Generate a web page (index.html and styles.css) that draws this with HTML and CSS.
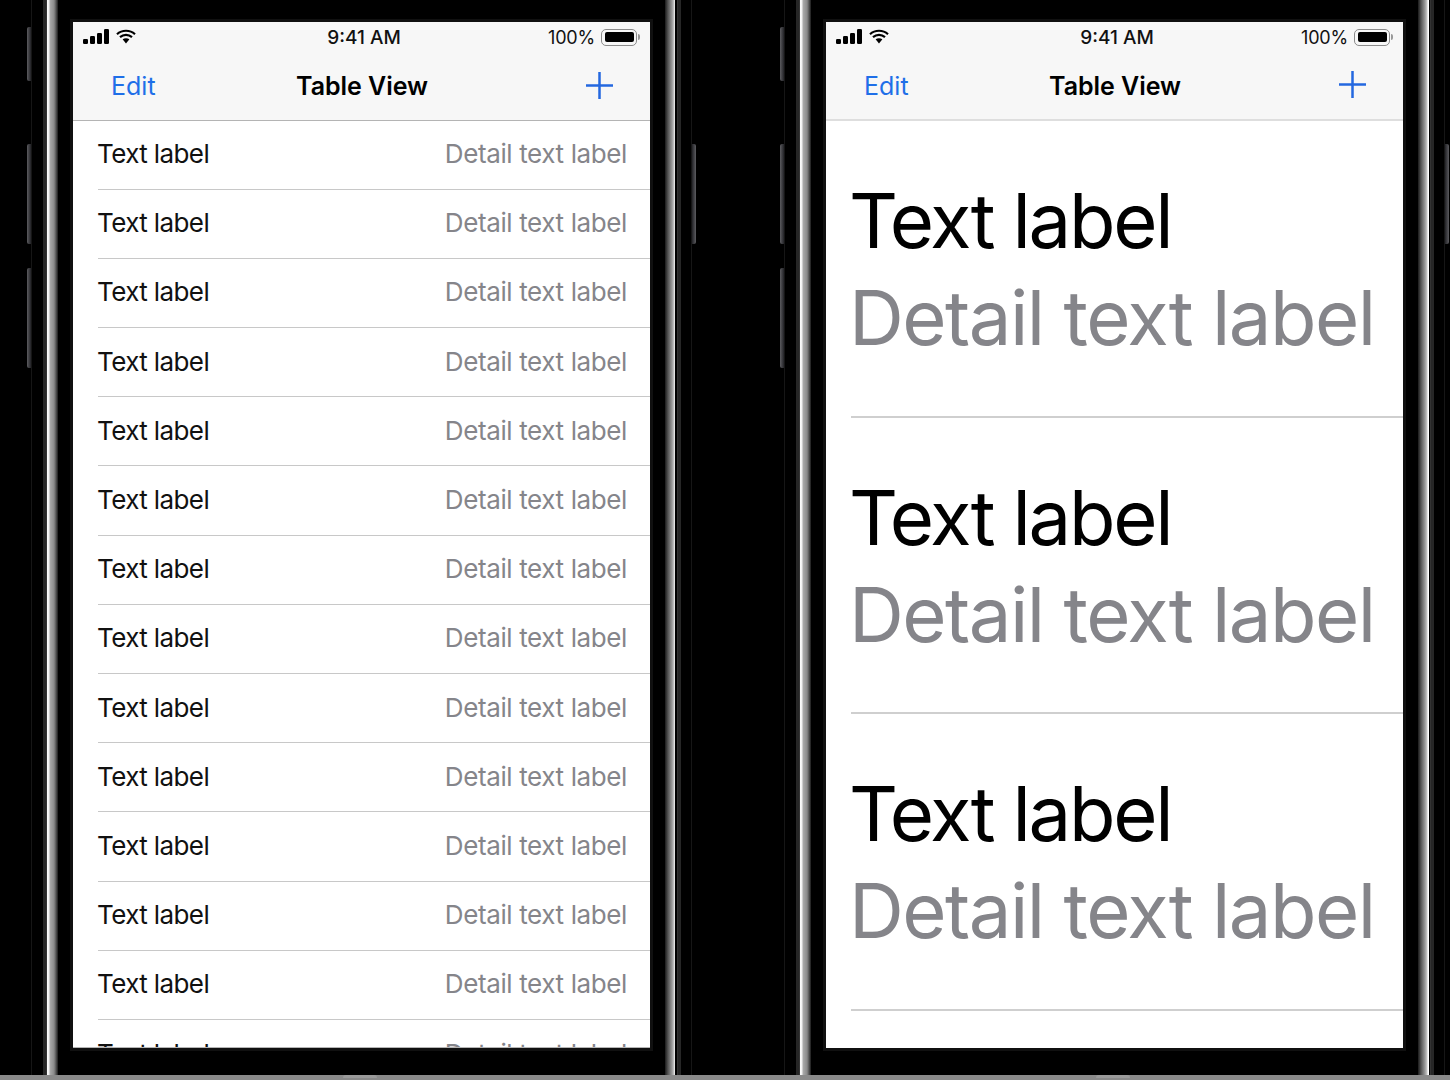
FILE: index.html
```html
<!DOCTYPE html>
<html lang="en">
<head>
    <meta charset="UTF-8">
    <title>Table View</title>
    <link rel="stylesheet" href="styles.css">
</head>
<body>

<div class="stage">
    <div class="phone">
        <span class="line line-left"></span>
        <span class="btn btn-mute"></span>
        <span class="btn btn-up"></span>
        <span class="btn btn-down"></span>
        <span class="line line-right"></span>
        <span class="btn btn-power"></span>
        <span class="home"></span>
        <div class="band band-l"></div>
        <div class="bezel">
            <div class="screen screen-edged">
                <div class="statusbar">
                    <div class="status-left">
                        <svg width="26" height="16" viewBox="0 0 26 16"><rect x="0" y="10" width="5" height="5" rx="1.2"/><rect x="7" y="7" width="5" height="8" rx="1.2"/><rect x="14" y="4" width="5" height="11" rx="1.2"/><rect x="21" y="0" width="5" height="15" rx="1.2"/></svg>
                        <svg class="wifi-icon" width="20" height="15" viewBox="0 0 20 15"><path class="wifi" d="M1 5.2C6 .6 14 .6 19 5.2M4 8.2c3.500-3 8.500-3 12 0"/><path d="M6.600 10.300c2-1.500 4.800-1.500 6.800 0L10 14.500z"/></svg>
                    </div>
                    <div class="time">9:41 AM</div>
                    <div class="status-right">
                        <span class="percent">100%</span>
                        <span class="battery"><span class="battery-fill"></span></span>
                        <span class="battery-nub"></span>
                    </div>
                </div>
                <div class="navbar">
                    <a class="edit">Edit</a>
                    <div class="nav-title">Table View</div>
                    <svg class="plus" width="27" height="27" viewBox="0 0 27 27"><path d="M13.500 0v27M0 13.500h27"/></svg>
                </div>
                <div class="list">
                    <div class="row"><span class="label">Text label</span><span class="detail">Detail text label</span></div>
                    <div class="row"><span class="label">Text label</span><span class="detail">Detail text label</span></div>
                    <div class="row"><span class="label">Text label</span><span class="detail">Detail text label</span></div>
                    <div class="row"><span class="label">Text label</span><span class="detail">Detail text label</span></div>
                    <div class="row"><span class="label">Text label</span><span class="detail">Detail text label</span></div>
                    <div class="row"><span class="label">Text label</span><span class="detail">Detail text label</span></div>
                    <div class="row"><span class="label">Text label</span><span class="detail">Detail text label</span></div>
                    <div class="row"><span class="label">Text label</span><span class="detail">Detail text label</span></div>
                    <div class="row"><span class="label">Text label</span><span class="detail">Detail text label</span></div>
                    <div class="row"><span class="label">Text label</span><span class="detail">Detail text label</span></div>
                    <div class="row"><span class="label">Text label</span><span class="detail">Detail text label</span></div>
                    <div class="row"><span class="label">Text label</span><span class="detail">Detail text label</span></div>
                    <div class="row"><span class="label">Text label</span><span class="detail">Detail text label</span></div>
                    <div class="row"><span class="label">Text label</span><span class="detail">Detail text label</span></div>
                </div>
            </div>
        </div>
        <div class="band band-r"></div>
    </div>

    <div class="phone">
        <span class="line line-left"></span>
        <span class="btn btn-mute"></span>
        <span class="btn btn-up"></span>
        <span class="btn btn-down"></span>
        <span class="line line-right"></span>
        <span class="btn btn-power"></span>
        <span class="home"></span>
        <div class="band band-l"></div>
        <div class="bezel">
            <div class="screen">
                <div class="statusbar">
                    <div class="status-left">
                        <svg width="26" height="16" viewBox="0 0 26 16"><rect x="0" y="10" width="5" height="5" rx="1.2"/><rect x="7" y="7" width="5" height="8" rx="1.2"/><rect x="14" y="4" width="5" height="11" rx="1.2"/><rect x="21" y="0" width="5" height="15" rx="1.2"/></svg>
                        <svg class="wifi-icon" width="20" height="15" viewBox="0 0 20 15"><path class="wifi" d="M1 5.2C6 .6 14 .6 19 5.2M4 8.2c3.500-3 8.500-3 12 0"/><path d="M6.600 10.300c2-1.500 4.800-1.500 6.800 0L10 14.500z"/></svg>
                    </div>
                    <div class="time">9:41 AM</div>
                    <div class="status-right">
                        <span class="percent">100%</span>
                        <span class="battery"><span class="battery-fill"></span></span>
                        <span class="battery-nub"></span>
                    </div>
                </div>
                <div class="navbar navbar-soft">
                    <a class="edit">Edit</a>
                    <div class="nav-title">Table View</div>
                    <svg class="plus" width="27" height="27" viewBox="0 0 27 27"><path d="M13.500 0v27M0 13.500h27"/></svg>
                </div>
                <div class="list">
                    <div class="big-row"><div class="label">Text label</div><div class="detail">Detail text label</div></div>
                    <div class="big-row"><div class="label">Text label</div><div class="detail">Detail text label</div></div>
                    <div class="big-row"><div class="label">Text label</div><div class="detail">Detail text label</div></div>
                </div>
            </div>
        </div>
        <div class="band band-r"></div>
    </div>
</div>
<div class="floor"></div>

</body>
</html>
```

FILE: styles.css
```css
html, body { margin: 0; padding: 0; background: #000; }
body { font-family: Inter, "Noto Sans", sans-serif; width: 1450px; height: 1080px; overflow: hidden; }

.stage { display: flex; gap: 121px; height: 1075px; padding-left: 46px; }
.floor { height: 5px; background: #8a8a8a; }

.phone { position: relative; display: flex; width: 632px; height: 1075px; }

.band { width: 12px; }
.band-l { background: linear-gradient(90deg, #333 0, #333 1px, #fff 1px, #eee 3px, #aaa 4px, #8a8a8a 8px, #555 10px, #1a1a1a 12px); box-shadow: -3px 0 0 #262626; }
.band-r { width: 13px; background: linear-gradient(90deg, #1a1a1a 0, #555 3px, #999 7px, #c8c8c8 9px, #fff 10px, #fff 10.500px, #000 10.500px, #000 12px, #333 12px); box-shadow: 3px 0 0 #262626; }

.bezel { flex: 1; padding: 22px 15px 27px 15px; }
.screen { height: 1026px; background: #fff; overflow: hidden; box-shadow: 0 0 0 3px #101010; }
.screen-edged { box-sizing: border-box; height: 1026px; border-bottom: 1px solid #b4b4b4; }

/* side buttons */
.line { position: absolute; top: 0; bottom: 0; width: 1px; background: #161616; }
.line-left { left: -15px; }
.line-right { right: -14px; }
.btn { position: absolute; width: 4px; box-sizing: border-box; background: linear-gradient(90deg, #5c5c60, #222226); border-radius: 2px 0 0 2px; }
.btn-mute { left: -19px; top: 27px; height: 54px; }
.btn-up { left: -19px; top: 144px; height: 100px; }
.btn-down { left: -19px; top: 268px; height: 100px; }
.btn-power { right: -18px; top: 144px; height: 100px; background: linear-gradient(90deg, #222226, #5c5c60); border-radius: 0 2px 2px 0; }
.home { position: absolute; left: 297px; bottom: -3px; width: 34px; height: 3px; background: #9a9a9a; border-radius: 17px 17px 0 0; }

/* status bar and nav */
.statusbar { display: grid; grid-template-columns: 1fr auto 1fr; align-items: center; height: 30px; padding: 0 9px 0 10px; background: #f7f7f7; font-size: 18px; color: #111; }
.status-left { display: flex; align-items: center; gap: 7px; }
.status-left svg { fill: #000; }
.wifi-icon { margin-top: -2px; }
.wifi { fill: none; stroke: #000; stroke-width: 2.200; }
.time { font-size: 19px; font-weight: 500; padding-left: 4px; }
.status-right { display: flex; align-items: center; justify-content: flex-end; gap: 1px; }
.percent { margin-right: 5px; letter-spacing: -0.2px; }
.battery { display: block; box-sizing: border-box; width: 36px; height: 17px; padding: 2.500px; border: 1.500px solid #8b8b8b; border-radius: 5px; }
.battery-fill { display: block; height: 100%; background: #000; border-radius: 2px; }
.battery-nub { display: block; width: 2px; height: 6px; margin-right: 1px; background: #999; border-radius: 0 2px 2px 0; }

.navbar { display: grid; grid-template-columns: 1fr auto 1fr; align-items: center; height: 68px; padding: 0 37px 0 38px; background: #f7f7f7; border-bottom: 1px solid #b4b4b4; }
.navbar-soft { border-bottom: 2px solid #dedede; height: 67px; }
.edit { font-size: 25px; color: #1f6fe8; }
.nav-title { font-size: 25px; font-weight: 600; color: #000; letter-spacing: -0.05px; }
.plus { justify-self: end; margin-top: -2px; }
.plus path { stroke: #2468e0; stroke-width: 2.500; fill: none; }

/* list rows */
.list { color: #111; }
.row { display: flex; justify-content: space-between; align-items: center; box-sizing: border-box; height: 69.200px; margin-left: 25px; padding: 0 23px 2px 0; font-size: 26px; border-bottom: 1px solid #c8c8c8; }
.row:first-child { height: 68.700px; }
.row .label { margin-left: -1px; letter-spacing: -0.6px; }
.row .detail { letter-spacing: -0.38px; }
.detail { color: #85858a; }

.big-row { box-sizing: border-box; height: 296.500px; margin-left: 25px; padding-top: 51px; font-size: 76px; line-height: 97px; color: #000; border-bottom: 2px solid #cfcfcf; white-space: nowrap; }
.big-row .label { margin-left: -2px; letter-spacing: -2.3px; }
.big-row .detail { margin-left: -2px; letter-spacing: -1.520px; }
```
